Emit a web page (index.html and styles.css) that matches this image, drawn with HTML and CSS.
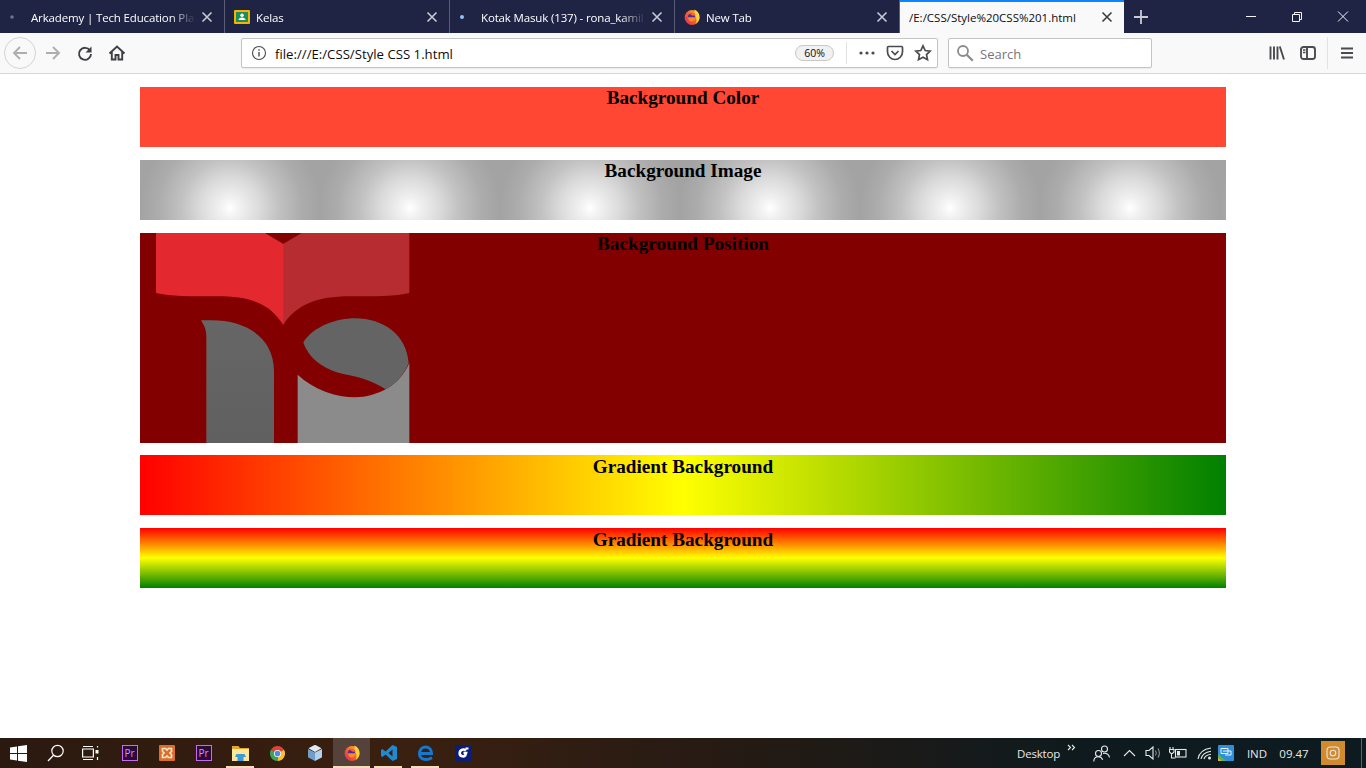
FILE: index.html
```html
<!DOCTYPE html>
<html lang="en">
<head>
<meta charset="utf-8">
<title>Style CSS 1</title>
<link rel="stylesheet" href="styles.css">
</head>
<body>
<div class="window">
  <svg class="defs" width="0" height="0" aria-hidden="true">
    <defs>
      <linearGradient id="fxg" x1="1" y1="0" x2="0" y2="1"><stop offset="0" stop-color="#ffc62e"/><stop offset=".5" stop-color="#f9602b"/><stop offset="1" stop-color="#e0245e"/></linearGradient>
      <symbol id="fx" viewBox="0 0 16 16">
        <circle cx="8" cy="8.500" r="7.400" fill="url(#fxg)"/>
        <path d="M10.500 .5C14 2 16 5.500 15.500 9.500 15 12 13.500 14 11.500 15 13 12.500 13 9 11 6.500z" fill="#ffd23a"/>
        <circle cx="7.500" cy="8" r="3.600" fill="#4b2aa0"/>
        <path d="M4 8.300h7.500c0 2.500-1.800 4.200-4 4.200S4 10.800 4 8.300z" fill="#fb8a26"/>
        <path d="M5.500 4.800c2-1.200 4.800-.7 6.300 1.700l-3.300.3z" fill="#f9602b"/>
      </symbol>
      <symbol id="tabx" viewBox="0 0 12 12"><path d="M1.500 1.500l9 9M10.500 1.500l-9 9"/></symbol>
    </defs>
  </svg>
  <header class="tabstrip">
    <div class="tab">
      <span class="favicon"><svg width="16" height="16" viewBox="0 0 16 16"><circle cx="3" cy="8" r="1.800" fill="#6f7388"/></svg></span>
      <span class="tab-title">Arkademy | Tech Education Plat</span>
      <svg class="tab-close" width="12" height="12"><use href="#tabx"/></svg>
    </div>
    <div class="tab">
      <span class="favicon"><svg width="16" height="16" viewBox="0 0 16 16"><rect x="0" y="1" width="16" height="14" rx="1" fill="#f4b400"/><rect x="2" y="3" width="12" height="10" fill="#1e8e5a"/><circle cx="8" cy="6.300" r="1.700" fill="#fff"/><path d="M4.500 11c0-1.700 1.600-2.600 3.500-2.600s3.500.9 3.500 2.600z" fill="#fff"/></svg></span>
      <span class="tab-title">Kelas</span>
      <svg class="tab-close" width="12" height="12"><use href="#tabx"/></svg>
    </div>
    <div class="tab">
      <span class="favicon"><svg width="16" height="16" viewBox="0 0 16 16"><circle cx="3" cy="8" r="2" fill="#8ec5f5"/></svg></span>
      <span class="tab-title">Kotak Masuk (137) - rona_kamil</span>
      <svg class="tab-close" width="12" height="12"><use href="#tabx"/></svg>
    </div>
    <div class="tab">
      <span class="favicon"><svg width="16" height="16"><use href="#fx"/></svg></span>
      <span class="tab-title">New Tab</span>
      <svg class="tab-close" width="12" height="12"><use href="#tabx"/></svg>
    </div>
    <div class="tab tab-active">
      <span class="tab-title tab-title-active">/E:/CSS/Style%20CSS%201.html</span>
      <svg class="tab-close" width="12" height="12"><use href="#tabx"/></svg>
    </div>
    <div class="newtab"><svg width="14" height="14" viewBox="0 0 14 14"><path d="M7 0v14M0 7h14"/></svg></div>
    <div class="winctrls">
      <svg width="46" height="33" viewBox="0 0 46 33"><path d="M18 16.500h10"/></svg>
      <svg width="46" height="33" viewBox="0 0 46 33"><path d="M18.500 14.500h7v7h-7zM20.500 14.500v-2h7v7h-2"/></svg>
      <svg width="46" height="33" viewBox="0 0 46 33"><path d="M18 11.500l10 10M28 11.500l-10 10"/></svg>
    </div>
  </header>

  <nav class="toolbar">
    <div class="btn btn-back"><svg width="18" height="18" viewBox="0 0 18 18"><path class="ic-dim" d="M16 9H3M9 3L3 9l6 6"/></svg></div>
    <div class="btn btn-fwd"><svg width="18" height="18" viewBox="0 0 18 18"><path class="ic-dim" d="M2 9h13M9 3l6 6-6 6"/></svg></div>
    <div class="btn"><svg width="18" height="18" viewBox="0 0 18 18"><path class="ic" d="M14 6.500A6 6 0 1 0 15 10"/><path class="ic-fill" d="M15.500 2.500v6h-6z"/></svg></div>
    <div class="btn"><svg width="18" height="18" viewBox="0 0 18 18"><path class="ic" d="M1.500 9.500L9 2.500l7.500 7M3.800 8v7.500h3.700v-4.500h3v4.500h3.700V8"/></svg></div>
    <div class="urlbar">
      <svg class="url-info" width="16" height="16" viewBox="0 0 16 16"><circle cx="8" cy="8" r="6.500" fill="none" stroke="#4a4a4f" stroke-width="1.100"/><path d="M7.300 7h1.400v4.500H7.300zM7.300 4.300h1.400v1.500H7.300z" fill="#4a4a4f"/></svg>
      <span class="url-text">file:///E:/CSS/Style CSS 1.html</span>
      <span class="zoom-pill">60%</span>
      <span class="url-sep"></span>
      <svg class="url-more" width="18" height="6" viewBox="0 0 18 6"><circle cx="3" cy="3" r="1.600"/><circle cx="9" cy="3" r="1.600"/><circle cx="15" cy="3" r="1.600"/></svg>
      <svg class="url-pocket" width="18" height="16" viewBox="0 0 18 16"><path class="ic-thick" d="M2.500 1.500h13c.6 0 1 .4 1 1V7c0 4-3.500 7.500-7.500 7.500S1.500 11 1.500 7V2.500c0-.6.4-1 1-1z"/><path class="ic-thick" d="M5.500 6L9 9.500 12.500 6"/></svg>
      <svg class="url-star" width="18" height="18" viewBox="0 0 18 18"><path class="ic-thick" d="M9 1.800l2.200 4.700 5 .6-3.700 3.500 1 5.100L9 13.200l-4.500 2.500 1-5.100L1.800 7.100l5-.6z"/></svg>
    </div>
    <div class="searchbar">
      <svg width="18" height="18" viewBox="0 0 18 18"><circle cx="7" cy="7" r="5" fill="none" stroke="#8a8a8e" stroke-width="1.800"/><path d="M10.800 10.800l6 6" stroke="#8a8a8e" stroke-width="2.200" fill="none"/></svg>
      <span class="search-text">Search</span>
    </div>
    <div class="toolbar-right">
      <svg class="tr-lib" width="16" height="16" viewBox="0 0 16 16"><path class="ic-bars" d="M1.500 1.500v13M5 1.500v13M8.500 1.500v13M10.800 1.500l4.200 13"/></svg>
      <svg class="tr-side" width="16" height="14" viewBox="0 0 16 14"><rect class="ic-bars" x="1" y="1" width="14" height="12" rx="2.500"/><path class="ic-bars" d="M7 1v12"/><path class="ic-thin" d="M3 4h2.500M3 6.500h2.500"/></svg>
      <span class="tr-sep"></span>
      <svg class="tr-menu" width="14" height="12" viewBox="0 0 14 12"><path class="ic-bars" d="M1 1.500h12M1 6h12M1 10.500h12"/></svg>
    </div>
  </nav>

  <main class="content">
    <section class="box box-color"><h3 class="box-title">Background Color</h3></section>
    <section class="box box-image"><h3 class="box-title">Background Image</h3></section>
    <section class="box box-position">
      <svg class="logo" width="300" height="210" viewBox="0 15 900 630">
        <defs>
          <linearGradient id="grayfade" x1="0" y1="0" x2="0" y2="1"><stop offset="0" stop-color="#666"/><stop offset="1" stop-color="#606060"/></linearGradient>
        </defs>
        <path fill="#b72c30" d="M428 49L485 15H808V195C770 205 700 205 630 205C530 205 470 230 430 290L428 288Z"/>
        <path fill="#e4282f" d="M48 15H375L430 48V290C390 230 340 205 230 205C150 205 90 205 48 195Z"/>
        <path fill="url(#grayfade)" d="M183 277H215C320 277 402 330 402 430V645H199V325C199 305 192 292 183 277Z"/>
        <path fill="#8b8b8b" d="M473 440C520 485 590 508 645 508C680 508 710 498 737 484C765 468 790 445 808 405V645H473Z"/>
        <path fill="#646464" d="M490 343C520 295 590 271 645 271C730 271 800 320 806 405C790 445 765 468 737 484C700 460 660 447 610 438C550 425 505 390 490 343Z"/>
      </svg>
      <h3 class="box-title box-title-over">Background Position</h3>
    </section>
    <section class="box box-grad-h"><h3 class="box-title">Gradient Background</h3></section>
    <section class="box box-grad-v"><h3 class="box-title">Gradient Background</h3></section>
  </main>

  <footer class="taskbar">
    <div class="tb-item"><svg width="17" height="17" viewBox="0 0 17 17"><path fill="#fff" d="M0 2.500l7-1v6.500H0zM8 1.300l9-1.300v8H8zM0 9h7v6.500l-7-1zM8 9h9v8l-9-1.300z"/></svg></div>
    <div class="tb-item"><svg width="18" height="18" viewBox="0 0 18 18"><circle cx="10.500" cy="7" r="5.700" fill="none" stroke="#fff" stroke-width="1.200"/><path d="M6.500 11.200L1 17" stroke="#fff" stroke-width="1.300" fill="none"/></svg></div>
    <div class="tb-item tb-view"><svg width="17" height="16" viewBox="0 0 17 16"><path fill="none" stroke="#fff" stroke-width="1.200" d="M0.600 4h10.800v8H0.600zM1 1.500h10M1 14.500h10"/><path stroke="#fff" stroke-width="1.200" d="M15.500 1v1.500M15.500 12v3"/><rect x="13.500" y="5" width="3" height="3.500" fill="#fff"/></svg></div>
    <div class="tb-item"><span class="pr-icon">Pr</span></div>
    <div class="tb-item"><svg width="16" height="16" viewBox="0 0 16 16"><rect width="16" height="16" rx="1" fill="#d96f28"/><path fill="none" stroke="#fbe3c8" stroke-width="1.700" d="M3.500 3.500h3L8 5l1.500-1.500h3v3L11 8l1.500 1.500v3h-3L8 11l-1.500 1.500h-3v-3L5 8 3.500 6.500z"/></svg></div>
    <div class="tb-item"><span class="pr-icon">Pr</span></div>
    <div class="tb-item tb-pinned"><svg width="17" height="15" viewBox="0 0 17 15"><path fill="#e0a92e" d="M0 0h6.500l1.500 2h9v3H0z"/><path fill="#fbe69a" d="M0 3h17v12H0z"/><path fill="#3d9ad6" d="M4.500 8h8l1.500 3h-2.500v4h-6v-4H3z"/></svg></div>
    <div class="tb-item"><svg width="15" height="15" viewBox="0 0 16 16"><path fill="#db4437" d="M8 8L1.070 4A8 8 0 0 1 14.930 4z"/><path fill="#fbc02d" d="M8 8L14.930 4A8 8 0 0 1 8 16z"/><path fill="#3da35a" d="M8 8L8 16A8 8 0 0 1 1.070 4z"/><circle cx="8" cy="8" r="3.800" fill="#fff"/><circle cx="8" cy="8" r="3" fill="#4a8be8"/></svg></div>
    <div class="tb-item"><svg width="14" height="16" viewBox="0 0 14 16"><path fill="#dfeaf5" d="M6 .3a2 2 0 0 1 2 0l5.500 3L7 7 .5 3.300z"/><path fill="#6f9fc9" d="M0 4l7 3.500V16l-6.300-3.200A1.300 1.300 0 0 1 0 11.700z"/><path fill="#b4d0ea" d="M14 4L7 7.500V16l6.300-3.200a1.300 1.300 0 0 0 .7-1.100z"/></svg></div>
    <div class="tb-item tb-active tb-pinned"><svg width="16" height="16"><use href="#fx"/></svg></div>
    <div class="tb-item tb-pinned"><svg width="16" height="16" viewBox="0 0 16 16"><path fill="#1f8ad2" d="M11.500 0L16 2v12l-4.500 2L4.500 9.500 1.500 12 0 11V5l1.500-1 3 2.500zM11.500 4.500L7.500 8l4 3.500z"/></svg></div>
    <div class="tb-item tb-pinned"><svg width="16" height="16" viewBox="0 0 16 16"><path fill="none" stroke="#1679d1" stroke-width="3" d="M3 8.500h10.500c0-4-2.500-6.500-6-6.500C4 2 1.500 5 1.500 9c0 3.800 3 5.500 6.500 5.500 2 0 3.800-.5 6-1.700"/></svg></div>
    <div class="tb-item"><svg width="16" height="16" viewBox="0 0 16 16"><rect width="16" height="16" fill="#0b1d78"/><path fill="none" stroke="#fff" stroke-width="2.600" d="M11 5.500C9 3.700 5 4.500 4.700 8c-.2 3 3.500 4.300 5.500 2.500L11 8H8.500"/><path fill="#fff" d="M10.500 2.500h3v2h-3z"/></svg></div>

    <div class="tray">
      <span class="tray-desktop">Desktop</span>
      <svg class="tray-chev" width="10" height="8" viewBox="0 0 10 8"><path d="M1 1l2.500 2.500L1 6M5 1l2.500 2.500L5 6"/></svg>
      <svg class="tray-people" width="17" height="17" viewBox="0 0 17 17"><circle cx="5.500" cy="8.500" r="3" /><path d="M0.800 16.500c0-3 2-4.800 4.700-4.800s3.500 1.200 4.200 3"/><circle cx="11.500" cy="4" r="3"/><path d="M10 8.500c3.500-.8 6 1 6.500 4"/></svg>
      <svg class="tray-caret" width="13" height="8" viewBox="0 0 13 8"><path d="M1 7l5.500-5.500L12 7"/></svg>
      <svg class="tray-speaker" width="17" height="16" viewBox="0 0 17 16"><path d="M1 5.500h3L8 2v12l-4-3.500H1z"/><path class="tray-wave" d="M10.500 5.500c1 1.500 1 3.500 0 5M13 3.500c1.800 2.500 1.800 6.500 0 9"/></svg>
      <svg class="tray-battery" width="18" height="14" viewBox="0 0 18 14"><path d="M1 3.500V1M4 3.500V1M0.500 3.500h4.500v2.500L3.500 7.500h-1.500L0.500 6zM2.500 7.500V12h4"/><rect x="6.500" y="3.500" width="10.500" height="7.500"/><rect class="tray-solid" x="8" y="5" width="3" height="4.500"/></svg>
      <svg class="tray-wifi" width="16" height="14" viewBox="0 0 16 14"><path d="M1 13C2 7 7 3 14 2M4 13c.8-4 4.500-7 10-7.800M7 13c.6-2.300 3-4.200 7-4.800"/><circle class="tray-solid" cx="12.500" cy="12" r="1.500"/></svg>
      <svg class="tray-app" width="16" height="16" viewBox="0 0 16 16"><rect width="16" height="16" rx="1" fill="#2f8fd8"/><path fill="#5fb35a" d="M0 9l8 7H1a1 1 0 0 1-1-1z"/><path fill="#f0b13c" d="M0 13l3.500 3H1a1 1 0 0 1-1-1z"/><path fill="none" stroke="#e8f6ff" stroke-width="1" d="M3 3.500h7v5H3zM5 6h8v4H7"/></svg>
      <span class="tray-ind">IND</span>
      <span class="tray-time">09.47</span>
      <span class="tray-insta"><svg width="14" height="14" viewBox="0 0 14 14"><rect x="1" y="1" width="12" height="12" rx="3.200"/><circle cx="7" cy="7" r="2.800"/></svg></span>
      <span class="tray-end"></span>
    </div>
  </footer>
</div>
</body>
</html>
```
FILE: styles.css
```css
* { box-sizing: border-box; }
html, body { margin: 0; height: 100%; }
body { background: #fff; overflow: hidden; }
.window { display: flex; flex-direction: column; height: 100vh; }
.defs { position: absolute; }

/* tab strip */
.tabstrip { display: flex; height: 33px; background: #1f2344; flex: none; font-family: "Open Sans", "Noto Sans", sans-serif; font-size: 11.5px; color: #fff; }
.tab { width: 225px; height: 33px; display: flex; align-items: center; padding-left: 9px; position: relative; }
.tab::after { content: ""; position: absolute; right: 0; top: 0; width: 1px; height: 33px; background: #5a5d73; }
.favicon { width: 16px; height: 16px; margin-right: 6px; flex: none; display: block; }
.favicon svg { display: block; }
.tab-title { width: 170px; margin-top: 2px; letter-spacing: -0.15px; white-space: nowrap; overflow: hidden; flex: none; -webkit-mask-image: linear-gradient(to right, #000 82%, transparent 97%); mask-image: linear-gradient(to right, #000 82%, transparent 97%); }
.tab-close { position: absolute; left: 201px; top: 11px; fill: none; stroke: #c9cad3; stroke-width: 1.600; }
.tab-active { background: #f9f9fa; color: #0c0c0d; border-top: 2px solid #0a84ff; width: 224px; }
.tab-active::after { display: none; }
.tab-active .tab-close { stroke: #3d3d40; top: 9px; }
.tab-title-active { width: 180px; margin-top: 0; letter-spacing: 0; -webkit-mask-image: none; mask-image: none; }
.newtab { width: 34px; display: flex; align-items: center; justify-content: center; }
.newtab svg { fill: none; stroke: #c9cad3; stroke-width: 1.800; }
.winctrls { margin-left: auto; display: flex; }
.winctrls svg { fill: none; stroke: #f4f4f8; stroke-width: 1; display: block; }

/* toolbar */
.toolbar { display: flex; align-items: center; height: 41px; flex: none; background: #f9f9fa; border-bottom: 1px solid #d8d8da; padding: 0 0 1px 4px; font-family: "Open Sans", "Noto Sans", sans-serif; }
.btn { width: 32px; height: 32px; display: flex; align-items: center; justify-content: center; flex: none; }
.btn-back { border: 1px solid #d4d4d6; border-radius: 50%; }
.btn-fwd { margin-left: 1px; }
.ic { fill: none; stroke: #3f3f44; stroke-width: 1.900; }
.ic-thick { fill: none; stroke: #4a4a4f; stroke-width: 1.700; }
.ic-dim { fill: none; stroke: #aeaeb0; stroke-width: 1.900; }
.ic-fill { fill: #3f3f44; }
.ic-thin { fill: none; stroke: #4a4a4f; stroke-width: 1.300; }
.ic-bars { fill: none; stroke: #4a4a4f; stroke-width: 1.900; }
.urlbar { margin-left: 108px; width: 697px; height: 30px; background: #fff; border: 1px solid #c4c4c6; border-radius: 2px; display: flex; align-items: center; padding-left: 9px; flex: none; box-shadow: 0 1px 1px rgba(0,0,0,.06); }
.url-info { flex: none; }
.url-text { font-size: 13.2px; color: #0c0c0d; margin: 2px 0 0 8px; width: 509px; white-space: nowrap; }
.zoom-pill { width: 39px; height: 16px; margin: 1px 0 0 11px; border: 1px solid #c8c8ca; border-radius: 8px; background: #f1f1f2; font-size: 10.500px; line-height: 14px; text-align: center; color: #0c0c0d; flex: none; }
.url-sep { width: 1px; height: 22px; background: #e2e2e4; margin-left: 12px; flex: none; }
.url-more { margin-left: 11px; fill: #4a4a4f; flex: none; }
.url-pocket { margin-left: 10px; flex: none; }
.url-star { margin-left: 10px; flex: none; }
.searchbar { margin-left: 10px; width: 204px; height: 30px; background: #fff; border: 1px solid #c4c4c6; border-radius: 2px; display: flex; align-items: center; padding-left: 7px; flex: none; box-shadow: 0 1px 1px rgba(0,0,0,.06); }
.search-text { font-size: 13px; color: #75757a; margin: 2px 0 0 6px; }
.toolbar-right { display: flex; align-items: center; flex: 1; }
.tr-lib { margin-left: 117px; }
.tr-side { margin-left: 15px; }
.tr-sep { width: 1px; height: 32px; background: #e2e2e4; margin-left: 11px; }
.tr-menu { margin-left: 12px; }

/* content */
.content { flex: 1; padding: 13px 140px 0; display: flex; flex-direction: column; gap: 13px; min-height: 0; }
.box { height: 60px; flex: none; position: relative; text-align: center; }
.box-title { margin: 0; font-family: "Liberation Serif", "Times New Roman", serif; font-size: 19.2px; font-weight: bold; line-height: 22px; color: #000; }
.box-title-over { position: relative; }
.box-color { background: #ff4733; }
.box-image { background: radial-gradient(circle 90px at 90px 48px, #fff 0%, #f0f0f0 12%, #dcdcdc 32%, #c2c2c2 54%, #acacac 80%, #a3a3a3 100%) 0 0 / 180px 60px repeat-x; background-color: #a3a3a3; }
.box-position { height: 210px; margin-bottom: -1px; background: #820000; overflow: hidden; }
.logo { position: absolute; left: 0; top: 0; display: block; }
.box-grad-h { background: linear-gradient(to right, #f00, #ff0, #008000); padding-top: 1px; }
.box-grad-v { background: linear-gradient(to bottom, #f00, #ff0, #008000); padding-top: 1px; }

/* taskbar */
.taskbar { height: 30px; flex: none; display: flex; align-items: center; background: linear-gradient(to right, #2b190f 0%, #3a2010 30%, #241a14 55%, #0e1a1e 80%, #0d1b20 100%); font-family: "Open Sans", "Noto Sans", sans-serif; color: #e8e8e8; }
.tb-item { width: 37px; height: 30px; display: flex; align-items: center; justify-content: center; flex: none; position: relative; }
.tb-view svg { margin-right: 5px; }
.tb-pinned::after { content: ""; position: absolute; left: 4px; right: 5px; bottom: 0; height: 2px; background: #f7dcbb; }
.tb-active { background: #55423a; }
.tb-active::after { left: 0; right: 0; }
.pr-icon { width: 16px; height: 16px; border: 1px solid #c66bf0; background: #2a0a3a; color: #d98cff; font-size: 10px; line-height: 14px; text-align: center; display: block; }
.tray { margin-left: auto; display: flex; align-items: center; height: 30px; font-size: 11.5px; }
.tray svg { flex: none; fill: none; stroke: #e8e8e8; stroke-width: 1.100; }
.tray svg .tray-solid { fill: #e8e8e8; stroke: none; }
.tray svg .tray-wave { stroke: #8f9699; }
.tray-desktop { width: 46px; white-space: nowrap; letter-spacing: -0.2px; }
.tray-chev { margin: -10px 0 0 4px; }
.tray-people { margin-left: 16px; }
.tray-caret { margin-left: 13px; }
.tray-speaker { margin-left: 9px; }
.tray-battery { margin-left: 7px; }
.tray-wifi { margin-left: 10px; }
.tray svg.tray-app { margin-left: 5px; stroke: none; }
.tray-ind { width: 42px; text-align: center; margin-left: 2px; }
.tray-time { width: 32px; margin-left: 0; text-align: center; }
.tray-insta { width: 24px; height: 24px; margin-left: 11px; background: #d18a2c; display: flex; align-items: center; justify-content: center; }
.tray-end { width: 1px; height: 30px; margin-left: 16px; margin-right: 4px; background: #5a6468; }
```
